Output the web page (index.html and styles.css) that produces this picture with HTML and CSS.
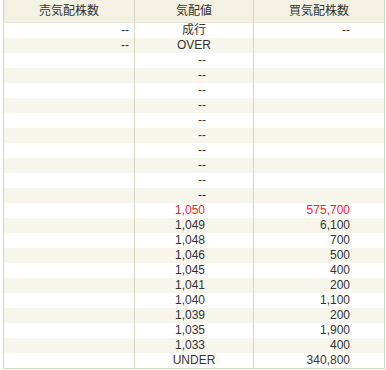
FILE: index.html
```
<!DOCTYPE html>
<html lang="ja">
<head>
<meta charset="utf-8">
<link rel="stylesheet" href="styles.css">
</head>
<body>
<table class="board">
  <thead>
    <tr><th class="c1">売気配株数</th><th class="c2">気配値</th><th class="c3">買気配株数</th></tr>
  </thead>
  <tbody>
    <tr><td class="c1">--</td><td class="c2 w">成行</td><td class="c3">--</td></tr>
    <tr><td class="c1">--</td><td class="c2 w">OVER</td><td class="c3"></td></tr>
    <tr><td class="c1"></td><td class="c2 d">--</td><td class="c3"></td></tr>
    <tr><td class="c1"></td><td class="c2 d">--</td><td class="c3"></td></tr>
    <tr><td class="c1"></td><td class="c2 d">--</td><td class="c3"></td></tr>
    <tr><td class="c1"></td><td class="c2 d">--</td><td class="c3"></td></tr>
    <tr><td class="c1"></td><td class="c2 d">--</td><td class="c3"></td></tr>
    <tr><td class="c1"></td><td class="c2 d">--</td><td class="c3"></td></tr>
    <tr><td class="c1"></td><td class="c2 d">--</td><td class="c3"></td></tr>
    <tr><td class="c1"></td><td class="c2 d">--</td><td class="c3"></td></tr>
    <tr><td class="c1"></td><td class="c2 d">--</td><td class="c3"></td></tr>
    <tr><td class="c1"></td><td class="c2 d blue">--</td><td class="c3"></td></tr>
    <tr class="red"><td class="c1"></td><td class="c2 n">1,050</td><td class="c3">575,700</td></tr>
    <tr><td class="c1"></td><td class="c2 n">1,049</td><td class="c3">6,100</td></tr>
    <tr><td class="c1"></td><td class="c2 n">1,048</td><td class="c3">700</td></tr>
    <tr><td class="c1"></td><td class="c2 n">1,046</td><td class="c3">500</td></tr>
    <tr><td class="c1"></td><td class="c2 n">1,045</td><td class="c3">400</td></tr>
    <tr><td class="c1"></td><td class="c2 n">1,041</td><td class="c3">200</td></tr>
    <tr><td class="c1"></td><td class="c2 n">1,040</td><td class="c3">1,100</td></tr>
    <tr><td class="c1"></td><td class="c2 n">1,039</td><td class="c3">200</td></tr>
    <tr><td class="c1"></td><td class="c2 n">1,035</td><td class="c3">1,900</td></tr>
    <tr><td class="c1"></td><td class="c2 n">1,033</td><td class="c3">400</td></tr>
    <tr><td class="c1"></td><td class="c2 w">UNDER</td><td class="c3">340,800</td></tr>
  </tbody>
</table>
</body>
</html>
```
FILE: styles.css
```
html, body {
  margin: 0;
  padding: 0;
  background: #ffffff;
}
body {
  padding: 0 3px;
  font-family: "Liberation Sans", "Noto Sans CJK JP", sans-serif;
  font-size: 12px;
  color: #333333;
}
.board {
  border-collapse: collapse;
  width: 380px;
  table-layout: fixed;
  border: 1px solid #d6d4c6;
  border-top: none;
}
.board th {
  height: 22px;
  padding: 0;
  font-weight: normal;
  background: #f3f1e1;
  border-left: 1px solid #d6d4c6;
  border-right: 1px solid #d6d4c6;
  border-bottom: 1px solid #e6e4d6;
  text-align: center;
  line-height: 22px;
}
.board td {
  height: 15px;
  padding: 0;
  line-height: 15px;
  border-left: 1px solid #d6d4c6;
  border-right: 1px solid #d6d4c6;
  white-space: nowrap;
}
.board tbody tr:nth-child(even) td {
  background: #f7f6ec;
}
.c1 { width: 130px; }
.c2 { width: 118px; }
.c3 { width: 130px; }
td.c1 { text-align: right; padding-right: 5px; }
td.c3 { text-align: right; padding-right: 34px; }
td.c2 { text-align: center; }
td.c2.n { padding-right: 8px; }
td.c2.d { padding-left: 16px; }
td.blue { color: #0000ee; }
tr.red td { color: #ff1a1a; }
```
